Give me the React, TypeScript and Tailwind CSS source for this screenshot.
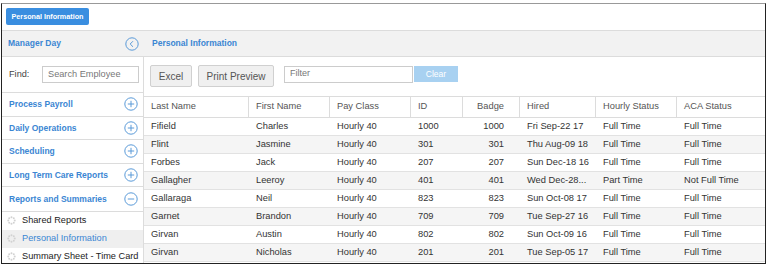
import React from 'react';

const rows = [
  ['Fifield', 'Charles', 'Hourly 40', '1000', '1000', 'Fri Sep-22 17', 'Full Time', 'Full Time'],
  ['Flint', 'Jasmine', 'Hourly 40', '301', '301', 'Thu Aug-09 18', 'Full Time', 'Full Time'],
  ['Forbes', 'Jack', 'Hourly 40', '207', '207', 'Sun Dec-18 16', 'Full Time', 'Full Time'],
  ['Gallagher', 'Leeroy', 'Hourly 40', '401', '401', 'Wed Dec-28...', 'Part Time', 'Not Full Time'],
  ['Gallaraga', 'Neil', 'Hourly 40', '823', '823', 'Sun Oct-08 17', 'Full Time', 'Full Time'],
  ['Garnet', 'Brandon', 'Hourly 40', '709', '709', 'Tue Sep-27 16', 'Full Time', 'Full Time'],
  ['Girvan', 'Austin', 'Hourly 40', '802', '802', 'Sun Oct-09 16', 'Full Time', 'Full Time'],
  ['Girvan', 'Nicholas', 'Hourly 40', '201', '201', 'Tue Sep-05 17', 'Full Time', 'Full Time'],
];

const headers = ['Last Name', 'First Name', 'Pay Class', 'ID', 'Badge', 'Hired', 'Hourly Status', 'ACA Status'];

const cols = 'grid grid-cols-[105px_81px_81px_52px_57px_76px_81px_1fr]';

const CircleIcon = ({ kind }: { kind: 'plus' | 'minus' | 'left' }) => (
  <svg width="14" height="14" viewBox="0 0 14 14" fill="none" stroke="#5a9ad8" strokeWidth="1">
    <circle cx="7" cy="7" r="6.2" />
    {kind !== 'left' && <path d="M3.8 7h6.4" />}
    {kind === 'plus' && <path d="M7 3.8v6.4" />}
    {kind === 'left' && <path d="M8 4.2 5.2 7 8 9.8" />}
  </svg>
);

const Bullet = () => (
  <svg width="9" height="9" viewBox="0 0 10 10" fill="#d2d2d2">
    {Array.from({ length: 8 }).map((_, i) => {
      const a = (i * Math.PI) / 4;
      return <circle key={i} cx={5 + 3.6 * Math.cos(a)} cy={5 + 3.6 * Math.sin(a)} r="1.1" />;
    })}
  </svg>
);

const navItems: [string, 'plus' | 'minus'][] = [
  ['Process Payroll', 'plus'],
  ['Daily Operations', 'plus'],
  ['Scheduling', 'plus'],
  ['Long Term Care Reports', 'plus'],
  ['Reports and Summaries', 'minus'],
];

const subItems = ['Shared Reports', 'Personal Information', 'Summary Sheet - Time Card'];

export default function App() {
  return (
    <div className="w-[768px] h-[272px] bg-white pl-px pt-[3px] font-['Liberation_Sans',Arial,sans-serif]">
      <div className="w-[765px] h-[261px] border border-[#222] border-t-[#999] flex flex-col overflow-hidden">
        {/* top bar */}
        <div className="h-[26px] pl-[4px] pt-[4px] shrink-0 flex items-start">
          <button className="h-[17px] w-[83px] rounded-[2px] bg-[#3a8ee0] text-white text-[7.2px] font-bold leading-[17px]">
            Personal Information
          </button>
        </div>

        {/* section header */}
        <div className="h-[27px] shrink-0 flex items-center bg-[#f2f2f2] border-y border-[#dcdcdc]">
          <div className="w-[142px] flex items-center justify-between pl-[6px] pr-[5px]">
            <span className="text-[8.5px] font-bold text-[#3b86d3]">Manager Day</span>
            <CircleIcon kind="left" />
          </div>
          <span className="pl-[8px] text-[8.5px] font-bold text-[#3b86d3]">Personal Information</span>
        </div>

        <div className="flex flex-1 min-h-0">
          {/* sidebar */}
          <div className="w-[142px] shrink-0 border-r border-[#dcdcdc] flex flex-col">
            <div className="h-[36px] shrink-0 flex items-center border-b border-[#dcdcdc] pl-[7px]">
              <span className="text-[9.2px] text-[#444] w-[33px]">Find:</span>
              <div className="w-[97px] h-[17px] border border-[#ccc] text-[9.2px] text-[#777] pl-[5px] leading-[15px]">
                Search Employee
              </div>
            </div>
            {navItems.map(([label, kind], i) => (
              <div
                key={label}
                className={`h-[23.6px] shrink-0 flex items-center justify-between pl-[7px] pr-[5px] ${i < 4 ? 'border-b' : ''} border-[#dcdcdc]`}
              >
                <span className="text-[8.5px] font-bold text-[#3b86d3]">{label}</span>
                <CircleIcon kind={kind} />
              </div>
            ))}
            <div className="border-t border-[#dcdcdc] shrink-0">
              {subItems.map((s, i) => (
                <div
                  key={s}
                  className={`h-[18px] flex items-center gap-[6px] pl-[5px] ${i === 1 ? 'bg-[#efefef] text-[#3b86d3]' : 'text-[#222]'}`}
                >
                  <Bullet />
                  <span className="text-[9.2px] whitespace-nowrap">{s}</span>
                </div>
              ))}
            </div>
          </div>

          {/* main */}
          <div className="flex-1 min-w-0 flex flex-col">
            <div className="h-[39px] shrink-0 flex items-start pl-[6px] pt-[8px]">
              <button className="h-[22px] w-[42px] border border-[#d0d0d0] rounded-[2px] bg-[#f0f0f0] text-[10px] text-[#555]">
                Excel
              </button>
              <button className="ml-[6px] h-[22px] w-[76px] border border-[#d0d0d0] rounded-[2px] bg-[#f0f0f0] text-[10px] text-[#555]">
                Print Preview
              </button>
              <div className="ml-[10px] mt-px h-[17px] w-[129px] border border-[#ccc] text-[9px] text-[#777] pl-[5px] leading-[13px]">
                Filter
              </div>
              <button className="ml-px mt-px h-[16px] w-[44px] bg-[#a8d1f1] text-white text-[8.5px] leading-[16px]">
                Clear
              </button>
            </div>

            <div className={`${cols} h-[22px] shrink-0 border-y border-[#dcdcdc] text-[9.3px] text-[#555]`}>
              {headers.map((h, i) => (
                <div
                  key={h}
                  className={`flex items-center ${i < 7 ? 'border-r border-[#dcdcdc]' : ''} ${i === 4 ? 'justify-end pr-[15px]' : 'pl-[7px]'}`}
                >
                  {h}
                </div>
              ))}
            </div>

            {rows.map((r, ri) => (
              <div
                key={ri}
                className={`${cols} h-[18px] shrink-0 border-b border-[#e2e2e2] text-[9.3px] text-[#333] ${ri % 2 === 1 ? 'bg-[#f5f5f5]' : 'bg-white'}`}
              >
                {r.map((c, ci) => (
                  <div
                    key={ci}
                    className={`flex items-center whitespace-nowrap overflow-hidden ${ci === 4 ? 'justify-end pr-[16px]' : 'pl-[7px]'}`}
                  >
                    {c}
                  </div>
                ))}
              </div>
            ))}
          </div>
        </div>
      </div>
    </div>
  );
}
